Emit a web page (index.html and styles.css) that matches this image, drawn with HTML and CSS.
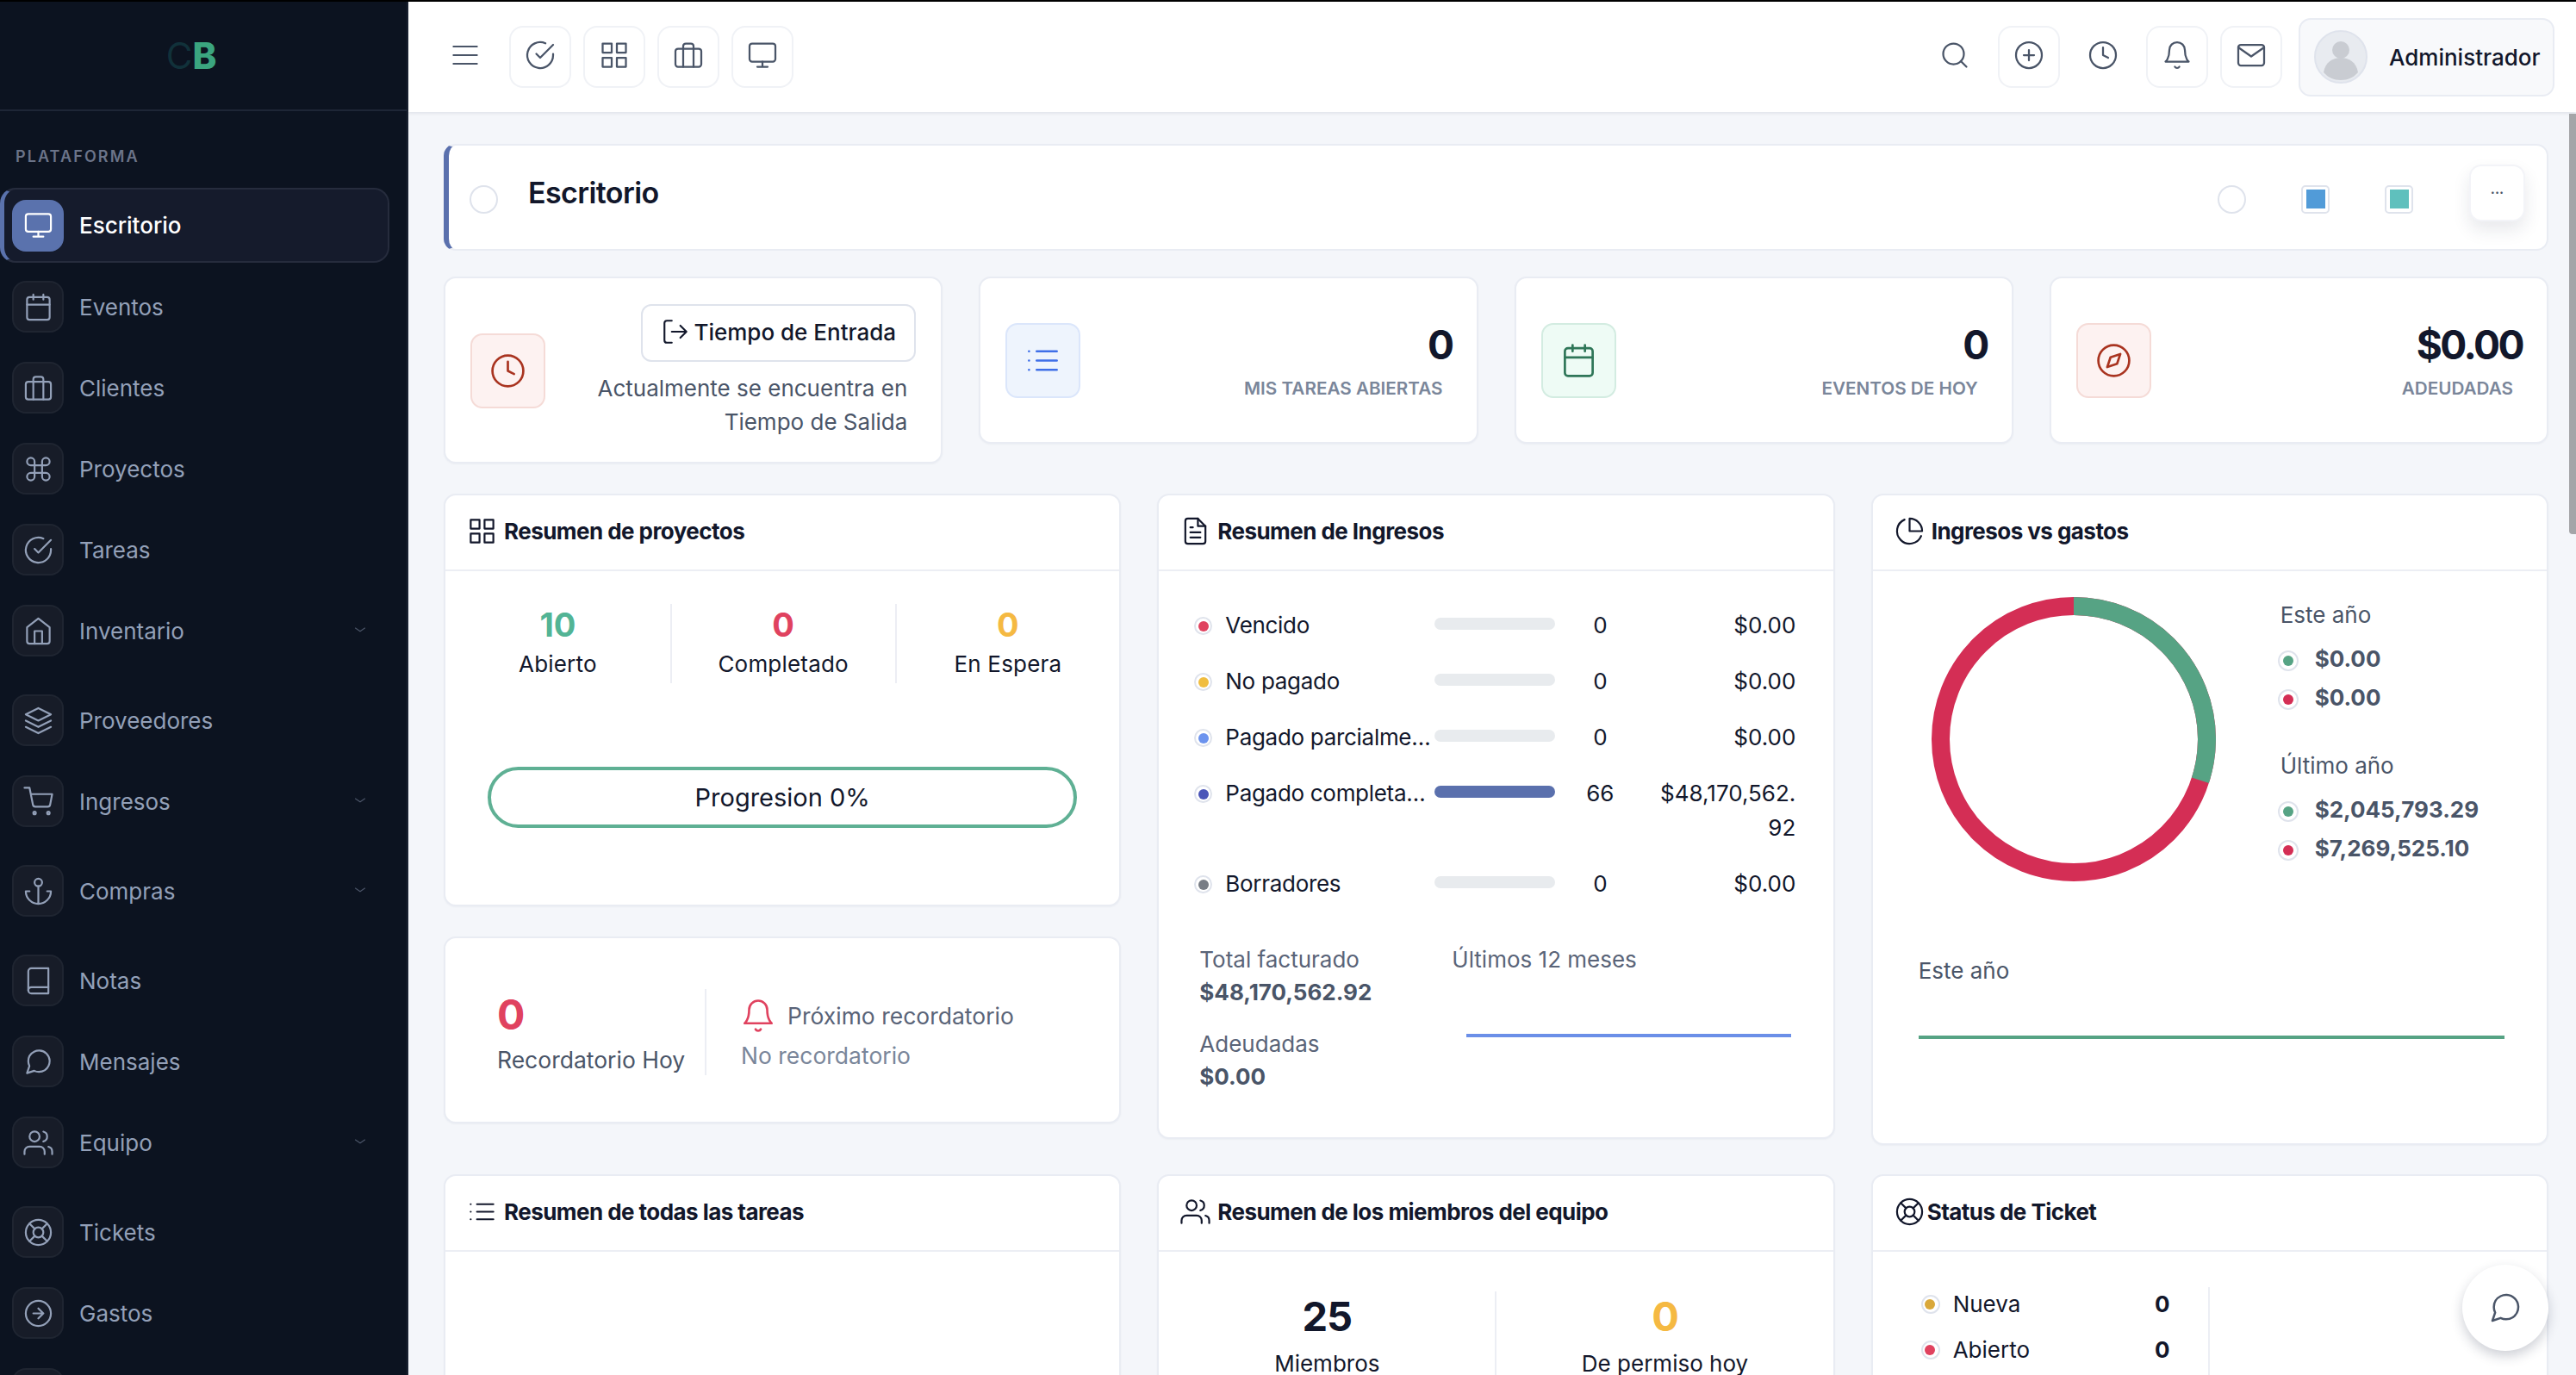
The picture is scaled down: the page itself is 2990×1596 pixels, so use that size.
FILE: index.html
```html
<!DOCTYPE html>
<html lang="es">

<head>
    <meta charset="UTF-8">
    <meta name="viewport" content="width=device-width, initial-scale=1.0">
    <title>Escritorio</title>
    <link rel="stylesheet" href="styles.css">
</head>

<body>
    <svg class="sprite" xmlns="http://www.w3.org/2000/svg">
        <symbol id="i-monitor" viewBox="0 0 24 24"><rect x="2" y="3" width="20" height="14" rx="2"/><path d="M8 21h8M12 17v4"/></symbol>
        <symbol id="i-calendar" viewBox="0 0 24 24"><rect x="3" y="4" width="18" height="18" rx="2"/><path d="M16 2v4M8 2v4M3 10h18"/></symbol>
        <symbol id="i-briefcase" viewBox="0 0 24 24"><rect x="2" y="7" width="20" height="14" rx="2"/><path d="M16 21V5a2 2 0 0 0-2-2h-4a2 2 0 0 0-2 2v16"/></symbol>
        <symbol id="i-command" viewBox="0 0 24 24"><path d="M18 3a3 3 0 0 0-3 3v12a3 3 0 0 0 3 3 3 3 0 0 0 3-3 3 3 0 0 0-3-3H6a3 3 0 0 0-3 3 3 3 0 0 0 3 3 3 3 0 0 0 3-3V6a3 3 0 0 0-3-3 3 3 0 0 0-3 3 3 3 0 0 0 3 3h12a3 3 0 0 0 3-3 3 3 0 0 0-3-3z"/></symbol>
        <symbol id="i-check" viewBox="0 0 24 24"><path d="M22 11.08V12a10 10 0 1 1-5.93-9.14"/><path d="M22 4 12 14.01l-3-3"/></symbol>
        <symbol id="i-home" viewBox="0 0 24 24"><path d="M3 9l9-7 9 7v11a2 2 0 0 1-2 2H5a2 2 0 0 1-2-2z"/><path d="M9 22V12h6v10"/></symbol>
        <symbol id="i-layers" viewBox="0 0 24 24"><path d="M12 2 2 7l10 5 10-5-10-5z"/><path d="M2 17l10 5 10-5M2 12l10 5 10-5"/></symbol>
        <symbol id="i-cart" viewBox="0 0 24 24"><circle cx="9" cy="21" r="1"/><circle cx="20" cy="21" r="1"/><path d="M1 1h4l2.68 13.39a2 2 0 0 0 2 1.61h9.72a2 2 0 0 0 2-1.61L23 6H6"/></symbol>
        <symbol id="i-anchor" viewBox="0 0 24 24"><circle cx="12" cy="5" r="3"/><path d="M12 22V8M5 12H2a10 10 0 0 0 20 0h-3"/></symbol>
        <symbol id="i-book" viewBox="0 0 24 24"><path d="M4 19.5A2.5 2.5 0 0 1 6.5 17H20"/><path d="M6.5 2H20v20H6.5A2.5 2.5 0 0 1 4 19.5v-15A2.5 2.5 0 0 1 6.5 2z"/></symbol>
        <symbol id="i-message" viewBox="0 0 24 24"><path d="M21 11.5a8.38 8.38 0 0 1-.9 3.8 8.5 8.5 0 0 1-7.6 4.7 8.38 8.38 0 0 1-3.8-.9L3 21l1.9-5.7a8.38 8.38 0 0 1-.9-3.8 8.5 8.5 0 0 1 4.7-7.6 8.38 8.38 0 0 1 3.8-.9h.5a8.48 8.48 0 0 1 8 8v.5z"/></symbol>
        <symbol id="i-users" viewBox="0 0 24 24"><path d="M17 21v-2a4 4 0 0 0-4-4H5a4 4 0 0 0-4 4v2"/><circle cx="9" cy="7" r="4"/><path d="M23 21v-2a4 4 0 0 0-3-3.87M16 3.13a4 4 0 0 1 0 7.75"/></symbol>
        <symbol id="i-buoy" viewBox="0 0 24 24"><circle cx="12" cy="12" r="10"/><circle cx="12" cy="12" r="4"/><path d="M4.93 4.93l4.24 4.24M14.83 14.83l4.24 4.24M14.83 9.17l4.24-4.24M4.93 19.07l4.24-4.24"/></symbol>
        <symbol id="i-arrow" viewBox="0 0 24 24"><circle cx="12" cy="12" r="10"/><path d="M12 16l4-4-4-4M8 12h8"/></symbol>
        <symbol id="i-chevron" viewBox="0 0 24 24"><path d="M2 8l10 7 10-7"/></symbol>
        <symbol id="i-menu" viewBox="0 0 24 24"><path d="M1 4h22M1 12h22M1 20h22"/></symbol>
        <symbol id="i-grid" viewBox="0 0 24 24"><rect x="3" y="3" width="7" height="7"/><rect x="14" y="3" width="7" height="7"/><rect x="14" y="14" width="7" height="7"/><rect x="3" y="14" width="7" height="7"/></symbol>
        <symbol id="i-search" viewBox="0 0 24 24"><circle cx="11" cy="11" r="8"/><path d="M21 21l-4.35-4.35"/></symbol>
        <symbol id="i-plus" viewBox="0 0 24 24"><circle cx="12" cy="12" r="10"/><path d="M12 8v8M8 12h8"/></symbol>
        <symbol id="i-clock" viewBox="0 0 24 24"><circle cx="12" cy="12" r="10"/><path d="M12 6v6l4 2"/></symbol>
        <symbol id="i-bell" viewBox="0 0 24 24"><path d="M18 8A6 6 0 0 0 6 8c0 7-3 9-3 9h18s-3-2-3-9"/><path d="M13.73 21a2 2 0 0 1-3.46 0"/></symbol>
        <symbol id="i-mail" viewBox="0 0 24 24"><path d="M4 4h16c1.1 0 2 .9 2 2v12c0 1.1-.9 2-2 2H4c-1.1 0-2-.9-2-2V6c0-1.1.9-2 2-2z"/><path d="M22 6l-10 7L2 6"/></symbol>
        <symbol id="i-list" viewBox="0 0 24 24"><path d="M8 6h13M8 12h13M8 18h13M3 6h.01M3 12h.01M3 18h.01"/></symbol>
        <symbol id="i-compass" viewBox="0 0 24 24"><circle cx="12" cy="12" r="10"/><path d="M16.24 7.76l-2.12 6.36-6.36 2.12 2.12-6.36 6.36-2.12z"/></symbol>
        <symbol id="i-enter" viewBox="0 0 24 24"><path d="M9 21H5a2 2 0 0 1-2-2V5a2 2 0 0 1 2-2h4"/><path d="M16 17l5-5-5-5M21 12H9"/></symbol>
        <symbol id="i-file" viewBox="0 0 24 24"><path d="M14 2H6a2 2 0 0 0-2 2v16a2 2 0 0 0 2 2h12a2 2 0 0 0 2-2V8z"/><path d="M14 2v6h6M16 13H8M16 17H8M10 9H8"/></symbol>
        <symbol id="i-pie" viewBox="0 0 24 24"><path d="M21.21 15.89A10 10 0 1 1 8 2.83"/><path d="M22 12A10 10 0 0 0 12 2v10z"/></symbol>
    </svg>

    <div class="app">
        <aside class="sidebar">
            <div class="brand"><span class="brand-c">C</span><span class="brand-b">B</span></div>
            <div class="nav-label">PLATAFORMA</div>
            <nav class="nav">
                <a class="nav-item active"><span class="nav-icon"><svg class="icon"><use href="#i-monitor"/></svg></span>Escritorio</a>
                <a class="nav-item"><span class="nav-icon"><svg class="icon"><use href="#i-calendar"/></svg></span>Eventos</a>
                <a class="nav-item"><span class="nav-icon"><svg class="icon"><use href="#i-briefcase"/></svg></span>Clientes</a>
                <a class="nav-item"><span class="nav-icon"><svg class="icon"><use href="#i-command"/></svg></span>Proyectos</a>
                <a class="nav-item"><span class="nav-icon"><svg class="icon"><use href="#i-check"/></svg></span>Tareas</a>
                <a class="nav-item has-sub"><span class="nav-icon"><svg class="icon"><use href="#i-home"/></svg></span>Inventario<svg class="nav-chevron"><use href="#i-chevron"/></svg></a>
                <a class="nav-item"><span class="nav-icon"><svg class="icon"><use href="#i-layers"/></svg></span>Proveedores</a>
                <a class="nav-item has-sub"><span class="nav-icon"><svg class="icon"><use href="#i-cart"/></svg></span>Ingresos<svg class="nav-chevron"><use href="#i-chevron"/></svg></a>
                <a class="nav-item has-sub"><span class="nav-icon"><svg class="icon"><use href="#i-anchor"/></svg></span>Compras<svg class="nav-chevron"><use href="#i-chevron"/></svg></a>
                <a class="nav-item"><span class="nav-icon"><svg class="icon"><use href="#i-book"/></svg></span>Notas</a>
                <a class="nav-item"><span class="nav-icon"><svg class="icon"><use href="#i-message"/></svg></span>Mensajes</a>
                <a class="nav-item has-sub"><span class="nav-icon"><svg class="icon"><use href="#i-users"/></svg></span>Equipo<svg class="nav-chevron"><use href="#i-chevron"/></svg></a>
                <a class="nav-item"><span class="nav-icon"><svg class="icon"><use href="#i-buoy"/></svg></span>Tickets</a>
                <a class="nav-item"><span class="nav-icon"><svg class="icon"><use href="#i-arrow"/></svg></span>Gastos</a>
                <a class="nav-item"><span class="nav-icon"></span></a>
            </nav>
        </aside>

        <div class="main">
            <header class="topbar">
                <div class="tool-group">
                    <svg class="icon menu-icon"><use href="#i-menu"/></svg>
                    <a class="tool-btn bordered"><svg class="icon"><use href="#i-check"/></svg></a>
                    <a class="tool-btn bordered"><svg class="icon"><use href="#i-grid"/></svg></a>
                    <a class="tool-btn bordered"><svg class="icon"><use href="#i-briefcase"/></svg></a>
                    <a class="tool-btn bordered"><svg class="icon"><use href="#i-monitor"/></svg></a>
                </div>
                <div class="tool-group">
                    <a class="tool-btn"><svg class="icon"><use href="#i-search"/></svg></a>
                    <a class="tool-btn bordered"><svg class="icon"><use href="#i-plus"/></svg></a>
                    <a class="tool-btn"><svg class="icon"><use href="#i-clock"/></svg></a>
                    <a class="tool-btn bordered"><svg class="icon"><use href="#i-bell"/></svg></a>
                    <a class="tool-btn bordered"><svg class="icon"><use href="#i-mail"/></svg></a>
                    <div class="profile">
                        <svg class="avatar" viewBox="0 0 62 62">
                            <circle cx="31" cy="31" r="30" fill="#e8ebf0" stroke="#dfe3ec" stroke-width="2"/>
                            <circle cx="31" cy="23" r="10" fill="#c9ccd2"/>
                            <path d="M11 49c2-12 11-17 20-17s18 5 20 17c-5 6-12 9-20 9s-15-3-20-9z" fill="#c9ccd2"/>
                        </svg>
                        <span>Administrador</span>
                    </div>
                </div>
            </header>

            <main class="content">
                <section class="page-head">
                    <span class="radio radio-first"></span>
                    <h1>Escritorio</h1>
                    <div class="theme-picks">
                        <span class="radio"></span>
                        <span class="swatch"><i class="swatch-blue"></i></span>
                        <span class="swatch"><i class="swatch-teal"></i></span>
                    </div>
                    <a class="more-btn">...</a>
                </section>

                <section class="stats">
                    <div class="card time-card">
                        <span class="stat-icon red"><svg class="icon"><use href="#i-clock"/></svg></span>
                        <div class="time-info">
                            <a class="time-btn"><svg class="icon"><use href="#i-enter"/></svg>Tiempo de Entrada</a>
                            <p>Actualmente se encuentra en<br>Tiempo de Salida</p>
                        </div>
                    </div>
                    <div class="card stat-card">
                        <span class="stat-icon blue"><svg class="icon"><use href="#i-list"/></svg></span>
                        <div class="stat-info">
                            <strong>0</strong>
                            <span>MIS TAREAS ABIERTAS</span>
                        </div>
                    </div>
                    <div class="card stat-card">
                        <span class="stat-icon green"><svg class="icon"><use href="#i-calendar"/></svg></span>
                        <div class="stat-info">
                            <strong>0</strong>
                            <span>EVENTOS DE HOY</span>
                        </div>
                    </div>
                    <div class="card stat-card">
                        <span class="stat-icon red"><svg class="icon"><use href="#i-compass"/></svg></span>
                        <div class="stat-info">
                            <strong>$0.00</strong>
                            <span>ADEUDADAS</span>
                        </div>
                    </div>
                </section>

                <section class="panels">
                    <div class="panel-stack">
                        <div class="card projects">
                            <div class="panel-head"><svg class="icon"><use href="#i-grid"/></svg>Resumen de proyectos</div>
                            <div class="project-stats">
                                <div class="project-stat"><strong class="c-green">10</strong><span>Abierto</span></div>
                                <div class="project-stat"><strong class="c-red">0</strong><span>Completado</span></div>
                                <div class="project-stat"><strong class="c-orange">0</strong><span>En Espera</span></div>
                            </div>
                            <div class="progress">Progresion 0%</div>
                        </div>
                        <div class="card reminder">
                            <div class="reminder-today">
                                <strong class="c-red">0</strong>
                                <span>Recordatorio Hoy</span>
                            </div>
                            <div class="reminder-next">
                                <div class="reminder-title"><svg class="icon"><use href="#i-bell"/></svg>Próximo recordatorio</div>
                                <span>No recordatorio</span>
                            </div>
                        </div>
                    </div>

                    <div class="card income">
                        <div class="panel-head"><svg class="icon"><use href="#i-file"/></svg>Resumen de Ingresos</div>
                        <div class="income-rows">
                            <div class="income-row">
                                <span class="dot d-red"></span><span class="income-name">Vencido</span>
                                <span class="bar"></span><span class="income-count">0</span><span class="income-amount">$0.00</span>
                            </div>
                            <div class="income-row">
                                <span class="dot d-yellow"></span><span class="income-name">No pagado</span>
                                <span class="bar"></span><span class="income-count">0</span><span class="income-amount">$0.00</span>
                            </div>
                            <div class="income-row">
                                <span class="dot d-sky"></span><span class="income-name">Pagado parcialmente</span>
                                <span class="bar"></span><span class="income-count">0</span><span class="income-amount">$0.00</span>
                            </div>
                            <div class="income-row">
                                <span class="dot d-indigo"></span><span class="income-name">Pagado completamente</span>
                                <span class="bar"><i class="bar-fill"></i></span><span class="income-count">66</span><span class="income-amount">$48,170,562.<wbr>92</span>
                            </div>
                            <div class="income-row">
                                <span class="dot d-gray"></span><span class="income-name">Borradores</span>
                                <span class="bar"></span><span class="income-count">0</span><span class="income-amount">$0.00</span>
                            </div>
                        </div>
                        <div class="income-foot">
                            <div class="income-totals">
                                <span>Total facturado</span>
                                <strong>$48,170,562.92</strong>
                                <span class="second">Adeudadas</span>
                                <strong>$0.00</strong>
                            </div>
                            <div class="income-trend">
                                <span>Últimos 12 meses</span>
                                <div class="trend-line"></div>
                            </div>
                        </div>
                    </div>

                    <div class="card versus">
                        <div class="panel-head"><svg class="icon"><use href="#i-pie"/></svg>Ingresos vs gastos</div>
                        <div class="versus-top">
                            <svg class="donut" viewBox="0 0 330 330">
                                <circle cx="165" cy="165" r="154.5" fill="none" stroke="#d42e55" stroke-width="21"/>
                                <circle cx="165" cy="165" r="154.5" fill="none" stroke="#56a384" stroke-width="21" pathLength="100" stroke-dasharray="30 70" transform="rotate(-90 165 165)"/>
                            </svg>
                            <div class="versus-legend">
                                <span class="legend-title">Este año</span>
                                <div class="legend-row first"><span class="dot d-green"></span><strong>$0.00</strong></div>
                                <div class="legend-row"><span class="dot d-crimson"></span><strong>$0.00</strong></div>
                                <span class="legend-title later">Último año</span>
                                <div class="legend-row first"><span class="dot d-green"></span><strong>$2,045,793.29</strong></div>
                                <div class="legend-row"><span class="dot d-crimson"></span><strong>$7,269,525.10</strong></div>
                            </div>
                        </div>
                        <div class="versus-year">Este año</div>
                        <div class="versus-line"></div>
                    </div>

                    <div class="card low-panel">
                        <div class="panel-head"><svg class="icon"><use href="#i-list"/></svg>Resumen de todas las tareas</div>
                    </div>

                    <div class="card low-panel">
                        <div class="panel-head"><svg class="icon"><use href="#i-users"/></svg>Resumen de los miembros del equipo</div>
                        <div class="members">
                            <div class="member-stat"><strong>25</strong><span>Miembros</span></div>
                            <div class="member-stat"><strong class="c-orange">0</strong><span>De permiso hoy</span></div>
                        </div>
                    </div>

                    <div class="card low-panel">
                        <div class="panel-head tight"><svg class="icon"><use href="#i-buoy"/></svg>Status de Ticket</div>
                        <div class="tickets">
                            <div class="ticket-row"><span class="dot d-gold"></span><span class="ticket-name">Nueva</span><strong>0</strong></div>
                            <div class="ticket-row"><span class="dot d-red"></span><span class="ticket-name">Abierto</span><strong>0</strong></div>
                        </div>
                    </div>
                </section>
            </main>
        </div>
    </div>

    <div class="scroll-thumb"></div>
    <a class="chat-fab"><svg class="icon"><use href="#i-message"/></svg></a>
</body>

</html>
```

FILE: styles.css
```css
* {
    box-sizing: border-box;
}

html,
body {
    height: 100%;
}

body {
    margin: 0;
    font-family: Inter, "Open Sans", sans-serif;
    font-size: 26px;
    color: #12172b;
    background-color: #f4f6fa;
    overflow: hidden;
    position: relative;
}

.sprite {
    display: none;
}

.icon {
    width: 35px;
    height: 35px;
    flex: none;
    fill: none;
    stroke: currentColor;
    stroke-width: 1.5;
    stroke-linecap: round;
    stroke-linejoin: round;
}

p,
h1 {
    margin: 0;
}

.app {
    display: flex;
    height: 1596px;
    border-top: 2px solid #000;
    overflow: hidden;
}

/* sidebar */
.sidebar {
    width: 474px;
    flex: none;
    background-color: #0c1320;
    border-right: 2px solid #1a2231;
    color: #93a0b8;
}

.brand {
    height: 127px;
    border-bottom: 2px solid #1e2636;
    display: flex;
    justify-content: center;
    align-items: center;
    font-size: 42px;
    line-height: 1;
    padding-right: 28px;
}

.brand-c {
    color: #11313a;
}

.brand-b {
    color: #3ba57f;
    font-weight: 800;
}

.nav-label {
    margin: 41px 0 24px 18px;
    height: 24px;
    line-height: 24px;
    font-size: 18px;
    font-weight: 600;
    letter-spacing: 2.1px;
    color: #6b7489;
}

.nav-item {
    display: flex;
    align-items: center;
    gap: 18px;
    height: 60px;
    margin: 0 0 34px 14px;
    position: relative;
}

.nav-item.has-sub {
    margin-bottom: 44px;
}

.nav-item.active {
    height: 87px;
    width: 452px;
    margin: 0 0 21px;
    padding-left: 14px;
    color: #fff;
    font-weight: 500;
    background-color: #151b2c;
    border: 2px solid #262c3d;
    border-left: 5px solid #5a72ad;
    border-radius: 18px;
}

.nav-item.active .nav-icon {
    margin-left: -5px;
    background-color: #5a72ad;
    border-color: #5a72ad;
}

.nav-icon {
    width: 60px;
    height: 60px;
    flex: none;
    display: flex;
    justify-content: center;
    align-items: center;
    background-color: #171c28;
    border: 2px solid #1f2531;
    border-radius: 16px;
}

.nav-chevron {
    position: absolute;
    left: 397px;
    top: 22px;
    width: 14px;
    height: 14px;
    fill: none;
    stroke: #4c5568;
    stroke-width: 2;
}

/* topbar */
.main {
    flex: 1;
    min-width: 0;
}

.topbar {
    height: 128px;
    background-color: #fff;
    box-shadow: 0 2px 3px rgba(30, 40, 70, 0.08);
    display: flex;
    justify-content: space-between;
    align-items: center;
    padding: 0 25px 0 51px;
    position: relative;
}

.tool-group {
    display: flex;
    align-items: center;
    gap: 14px;
}

.menu-icon {
    width: 30px;
    height: 30px;
    margin: 0 22px 4px 0;
    color: #4a5568;
}

.tool-btn {
    width: 72px;
    height: 72px;
    padding-bottom: 5px;
    display: flex;
    justify-content: center;
    align-items: center;
    color: #4a5568;
    border: 2px solid transparent;
    border-radius: 16px;
}

.tool-btn .icon {
    width: 36px;
    height: 36px;
}

.tool-btn.bordered {
    border-color: #f0f2f6;
}

.profile {
    width: 297px;
    height: 91px;
    margin-left: 5px;
    display: flex;
    align-items: center;
    gap: 25px;
    padding-left: 16px;
    background-color: #f8f9fb;
    border: 2px solid #e9ecf3;
    border-radius: 14px;
}

.avatar {
    width: 62px;
    height: 62px;
    flex: none;
}

.profile span {
    font-weight: 500;
    white-space: nowrap;
}

/* page */
.content {
    padding: 37px 32px 0 41px;
}

.card {
    background-color: #fff;
    border: 2px solid #e9ecf3;
    border-radius: 14px;
    box-shadow: 0 1px 2px rgba(30, 40, 70, 0.04);
}

.page-head {
    height: 124px;
    display: flex;
    align-items: center;
    padding: 0 25px 0 24px;
    background-color: #fff;
    border: 2px solid #e9ecf3;
    border-left: 6px solid #5a70ad;
    border-radius: 14px;
}

.page-head h1 {
    margin: 0 auto 12px 35px;
    font-size: 34px;
    font-weight: 600;
    letter-spacing: -0.6px;
}

.radio {
    width: 33px;
    height: 33px;
    border: 2px solid #dfe3ec;
    border-radius: 50%;
    display: block;
    flex: none;
}

.radio-first {
    margin-top: 4px;
}

.theme-picks {
    display: flex;
    gap: 64px;
    margin-top: 4px;
}

.swatch {
    width: 33px;
    height: 33px;
    display: flex;
    justify-content: center;
    align-items: center;
    border: 2px solid #dfe3ec;
    border-radius: 5px;
}

.swatch i {
    width: 22px;
    height: 22px;
}

.swatch-blue {
    background-color: #519bd8;
}

.swatch-teal {
    background-color: #5fc0bd;
}

.more-btn {
    width: 65px;
    height: 66px;
    margin: 0 0 10px 65px;
    display: flex;
    justify-content: center;
    padding-top: 14px;
    font-size: 16px;
    font-weight: 600;
    line-height: 24px;
    color: #4a5568;
    background-color: #fff;
    border: 2px solid #f3f4f8;
    border-radius: 14px;
    box-shadow: 0 10px 20px rgba(30, 40, 70, 0.1);
}

.stats {
    display: grid;
    grid-template-columns: repeat(4, 1fr);
    gap: 42px;
    align-items: start;
    margin-top: 30px;
}

.stat-card {
    height: 194px;
    display: flex;
    justify-content: space-between;
    padding: 52px 28px 0 29px;
}

.stat-icon {
    width: 87px;
    height: 87px;
    flex: none;
    display: flex;
    justify-content: center;
    align-items: center;
    border: 2px solid;
    border-radius: 14px;
}

.stat-icon .icon {
    width: 43px;
    height: 43px;
}

.stat-icon.red {
    color: #a93420;
    background-color: #fdf2f1;
    border-color: #f5dbd7;
}

.stat-icon.blue {
    color: #3f6fe8;
    background-color: #eef4fd;
    border-color: #dbe6fb;
}

.stat-icon.green {
    color: #2f7658;
    background-color: #eefbf5;
    border-color: #d3ece1;
}

.stat-info {
    text-align: right;
}

.stat-info strong {
    display: block;
    font-size: 46px;
    line-height: 50px;
    font-weight: 700;
    letter-spacing: -2.5px;
}

.stat-info span {
    display: block;
    margin: 13px 11px 0 0;
    font-size: 20.7px;
    line-height: 26px;
    font-weight: 600;
    color: #7a869a;
}

.time-card {
    height: 217px;
    display: flex;
    padding: 30px 29px 0 29px;
}

.time-card .stat-icon {
    margin-top: 34px;
}

.time-info {
    flex: 1;
    display: flex;
    flex-direction: column;
    align-items: flex-end;
}

.time-btn {
    width: 319px;
    height: 67px;
    display: flex;
    align-items: center;
    justify-content: center;
    gap: 4px;
    padding-bottom: 3px;
    font-weight: 500;
    white-space: nowrap;
    border: 2px solid #dfe3ec;
    border-radius: 12px;
}

.time-btn .icon {
    width: 34px;
    height: 34px;
}

.time-info p {
    margin: 11px 10px 0 0;
    text-align: right;
    line-height: 39px;
    color: #4a5568;
}

.panels {
    display: grid;
    grid-template-columns: repeat(3, 1fr);
    grid-template-rows: 756px auto;
    column-gap: 42px;
    row-gap: 34px;
    align-items: start;
    margin-top: 35px;
}

.panel-stack {
    display: flex;
    flex-direction: column;
    gap: 35px;
}

.panel-head {
    height: 88px;
    display: flex;
    align-items: center;
    gap: 8px;
    padding: 0 0 3px 25px;
    font-weight: 700;
    letter-spacing: -0.55px;
    border-bottom: 2px solid #eceef4;
}

.panel-head.tight {
    gap: 3px;
}

.projects {
    height: 479px;
}

.project-stats {
    display: grid;
    grid-template-columns: repeat(3, 1fr);
    margin-top: 38px;
    height: 89px;
}

.project-stat {
    display: flex;
    flex-direction: column;
    align-items: center;
    border-left: 2px solid #eceef4;
}

.project-stat:first-child {
    border-left: 0;
}

.project-stat strong {
    font-size: 38px;
    line-height: 48px;
    font-weight: 700;
}

.project-stat span {
    line-height: 44px;
    letter-spacing: 0.2px;
}

.progress {
    height: 71px;
    margin: 100px 49px 0;
    display: flex;
    justify-content: center;
    align-items: center;
    font-size: 29px;
    border: 4px solid #5fb094;
    border-radius: 36px;
}

.c-green {
    color: #52b495;
}

.c-red {
    color: #e0425f;
}

.c-orange {
    color: #f5b942;
}

.reminder {
    height: 217px;
    display: flex;
    align-items: flex-start;
    padding: 59px 0 0 60px;
    font-size: 26.5px;
}

.reminder-today {
    width: 243px;
    height: 100px;
    border-right: 2px solid #eceef4;
    display: flex;
    flex-direction: column;
    color: #4a5568;
}

.reminder-today strong {
    font-size: 48px;
    line-height: 60px;
    font-weight: 700;
}

.reminder-today span {
    margin-top: 4px;
    line-height: 36px;
    white-space: nowrap;
}

.reminder-next {
    padding-left: 40px;
    color: #7a869a;
    white-space: nowrap;
}

.reminder-title {
    display: flex;
    align-items: center;
    gap: 13px;
    margin: 12px 0 11px -1px;
    height: 38px;
    color: #5a6478;
}

.reminder-title .icon {
    width: 42px;
    height: 42px;
    color: #e0425f;
}

.income {
    height: 749px;
}

.income-rows {
    padding: 43px 0 0 41px;
}

.income-row {
    display: flex;
    align-items: flex-start;
    line-height: 40px;
    padding-bottom: 25px;
}

.dot {
    width: 21px;
    height: 21px;
    flex: none;
    display: block;
    position: relative;
    margin-top: 10px;
    border: 2px solid #dfe3ec;
    border-radius: 50%;
    background-color: #fff;
}

.dot::after {
    content: "";
    position: absolute;
    top: 2.5px;
    left: 2.5px;
    width: 12px;
    height: 12px;
    border-radius: 50%;
    background-color: currentColor;
}

.d-red { color: #e0425f; }
.d-yellow { color: #f0bd3f; }
.d-sky { color: #6c93ee; }
.d-indigo { color: #4a55b8; }
.d-gray { color: #787d85; }
.d-green { color: #56a384; }
.d-crimson { color: #d42e55; }
.d-gold { color: #d9a83a; }

.income-name {
    width: 243px;
    margin-left: 15px;
    flex: none;
    letter-spacing: -0.3px;
    white-space: nowrap;
    overflow: hidden;
    text-overflow: ellipsis;
}

.bar {
    width: 140px;
    height: 14px;
    flex: none;
    margin-top: 11px;
    background-color: #e8ebee;
    border-radius: 7px;
    overflow: hidden;
}

.bar-fill {
    display: block;
    height: 100%;
    background-color: #5a70ad;
}

.income-count {
    width: 104px;
    flex: none;
    text-align: center;
}

.income-amount {
    width: 175px;
    flex: none;
    padding-left: 8px;
    text-align: right;
}

.income-foot {
    display: flex;
    padding: 24px 0 0 47px;
    line-height: 38px;
    color: #5a6478;
}

.income-totals {
    width: 293px;
    flex: none;
    display: flex;
    flex-direction: column;
}

.income-totals strong {
    color: #4a5568;
    font-weight: 700;
}

.income-totals .second {
    margin-top: 22px;
}

.trend-line {
    width: 377px;
    height: 4px;
    margin: 67px 0 0 17px;
    background-color: #6b8fe8;
}

.versus {
    height: 756px;
}

.versus-top {
    display: flex;
    align-items: flex-start;
    padding: 30px 0 0 68px;
    height: 360px;
}

.donut {
    width: 330px;
    height: 330px;
    flex: none;
}

.versus-legend {
    margin: 3px 0 0 72px;
    display: flex;
    flex-direction: column;
    color: #4a5568;
}

.legend-title {
    line-height: 36px;
    margin-left: 3px;
}

.legend-title.later {
    margin-top: 39px;
}

.legend-row {
    height: 45px;
    display: flex;
    align-items: center;
    gap: 19px;
}

.legend-row.first {
    margin-top: 10px;
}

.legend-row .dot {
    width: 24px;
    height: 24px;
    margin-top: 4px;
}

.legend-row .dot::after {
    top: 4px;
    left: 4px;
}

.legend-row strong {
    font-weight: 700;
}

.versus-year {
    margin: 86px 0 0 53px;
    line-height: 36px;
    color: #4a5568;
}

.versus-line {
    width: 680px;
    height: 4px;
    margin: 57px 0 0 53px;
    background-color: #56a384;
}

.low-panel {
    height: 300px;
}

.members {
    display: grid;
    grid-template-columns: 390px 1fr;
    margin-top: 46px;
}

.member-stat {
    display: flex;
    flex-direction: column;
    align-items: center;
}

.member-stat + .member-stat {
    border-left: 2px solid #eceef4;
}

.member-stat strong {
    font-size: 47px;
    line-height: 58px;
    font-weight: 700;
    letter-spacing: -1px;
}

.member-stat span {
    margin-top: 10px;
    line-height: 32px;
}

.tickets {
    width: 391px;
    height: 200px;
    margin-top: 41px;
    padding: 0 44px 0 56px;
    border-right: 2px solid #eceef4;
}

.ticket-row {
    height: 38px;
    margin-bottom: 15px;
    display: flex;
    align-items: center;
    gap: 15px;
}

.ticket-row .dot {
    width: 22px;
    height: 22px;
    margin-top: 2px;
}

.ticket-name {
    flex: 1;
}

.ticket-row strong {
    font-weight: 700;
}

/* overlays */
.scroll-thumb {
    position: absolute;
    top: 132px;
    right: 0;
    width: 8px;
    height: 488px;
    background-color: #a4a5a8;
    border-radius: 0 0 0 4px;
}

.chat-fab {
    position: absolute;
    left: 2858px;
    top: 1468px;
    width: 100px;
    height: 100px;
    display: flex;
    justify-content: center;
    align-items: center;
    color: #4a5568;
    background-color: #fff;
    border-radius: 50%;
    box-shadow: 0 6px 14px rgba(30, 40, 70, 0.22);
}

.chat-fab .icon {
    width: 40px;
    height: 40px;
}
```
